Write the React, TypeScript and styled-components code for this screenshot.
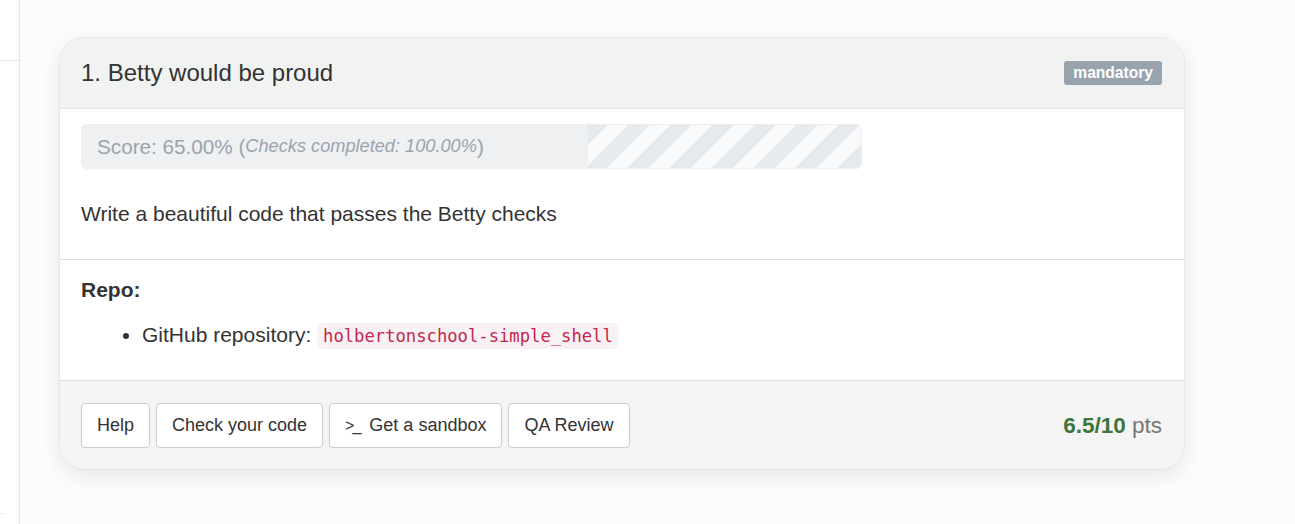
import styled, { createGlobalStyle } from 'styled-components';

const GlobalStyle = createGlobalStyle`
    html, body {
        margin: 0;
        padding: 0;
        background: #fcfcfc;
        font-family: "Liberation Sans", Arial, Helvetica, sans-serif;
        color: #333;
    }
`

const Page = styled.div`
    display: flex;
    min-height: 524px;
`

const Sidebar = styled.aside`
    width: 19px;
    flex-shrink: 0;
    background: #fff;
    border-right: 1px solid #e6e6e6;
    display: flex;
    flex-direction: column;
`

const SidebarItem = styled.div<{ $h: number; $w?: number }>`
    height: ${p => p.$h}px;
    width: ${p => p.$w ?? 19}px;
    border-bottom: 1px solid #e4e4e4;
`

const Main = styled.main`
    flex: 1;
    padding: 37px 0 0 39px;
`

const Card = styled.section`
    width: 1126px;
    box-sizing: border-box;
    border: 1px solid #e6e6e6;
    border-radius: 26px;
    overflow: hidden;
    background: #fff;
    box-shadow: 0 6px 22px rgba(0, 0, 0, 0.09);
`

const Header = styled.header`
    display: flex;
    align-items: center;
    justify-content: space-between;
    height: 70px;
    padding: 0 22px 0 21px;
    background: #f1f2f2;
    border-bottom: 1px solid #dfe2e2;
`

const Title = styled.h3`
    margin: 0;
    font-size: 24px;
    font-weight: 400;
    color: #333;
`

const Badge = styled.span`
    background: #99a3ad;
    color: #fff;
    font-weight: 700;
    font-size: 15.6px;
    line-height: 24px;
    height: 24px;
    padding: 0 9px;
    border-radius: 3px;
`

const Section = styled.div<{ $pad: string }>`
    padding: ${p => p.$pad};
    border-bottom: 1px solid #dfdfdf;
`

const Progress = styled.div`
    width: 781px;
    height: 45px;
    box-sizing: border-box;
    border: 1px solid #eceeef;
    border-radius: 6px;
    overflow: hidden;
    background: repeating-linear-gradient(
        135deg,
        #e7eaed 0px,
        #e7eaed 15px,
        #f8f9fa 15px,
        #f8f9fa 29.7px
    );
    margin-bottom: 30px;
`

const ProgressFill = styled.div`
    height: 100%;
    background: #eef0f2;
    border-radius: 6px;
    display: flex;
    align-items: center;
    padding-left: 15px;
    box-sizing: border-box;
    white-space: nowrap;
    color: #9aa4ae;
    font-size: 20.7px;
`

const Small = styled.em`
    font-size: 18.2px;
`

const Text = styled.p`
    margin: 0;
    font-size: 21px;
    line-height: 30px;
`

const Label = styled.p`
    margin: 0 0 15px;
    font-size: 21px;
    font-weight: 700;
    line-height: 30px;
`

const List = styled.ul`
    margin: 0;
    padding-left: 61px;
    font-size: 21px;
    line-height: 30px;
`

const Code = styled.code`
    font-family: "DejaVu Sans Mono", "Liberation Mono", monospace;
    font-size: 17.2px;
    color: #c7254e;
    background: #f9f2f4;
    border-radius: 5px;
    padding: 3px 6px;
`

const Footer = styled.footer`
    display: flex;
    align-items: center;
    justify-content: space-between;
    background: #f4f4f4;
    padding: 22px 22px 21px 21px;
`

const Buttons = styled.div`
    display: flex;
    gap: 6px;
`

const Button = styled.button`
    height: 45px;
    padding: 0 15px;
    background: #fff;
    border: 1px solid #ccc;
    border-radius: 4px;
    font-family: inherit;
    font-size: 18px;
    color: #333;
    cursor: pointer;
`

const Prompt = styled.span`
    font-size: 16px;
    margin-right: 10px;
    letter-spacing: -2px;
`

const Points = styled.div`
    font-size: 22.5px;
    color: #777;
`

const Earned = styled.strong`
    color: #3c763d;
`

const score = 65

export default function App() {
    return (
        <Page>
            <GlobalStyle />
            <Sidebar>
                <SidebarItem $h={60} />
                <SidebarItem $h={452} $w={4} />
            </Sidebar>
            <Main>
                <Card>
                    <Header>
                        <Title>1. Betty would be proud</Title>
                        <Badge>mandatory</Badge>
                    </Header>
                    <Section $pad="15px 23px 30px 21px">
                        <Progress>
                            <ProgressFill style={{ width: `${score}%` }}>
                                Score: 65.00% (<Small>Checks completed: 100.00%</Small>)
                            </ProgressFill>
                        </Progress>
                        <Text>Write a beautiful code that passes the Betty checks</Text>
                    </Section>
                    <Section $pad="15px 23px 29px 21px">
                        <Label>Repo:</Label>
                        <List>
                            <li>
                                GitHub repository: <Code>holbertonschool-simple_shell</Code>
                            </li>
                        </List>
                    </Section>
                    <Footer>
                        <Buttons>
                            <Button>Help</Button>
                            <Button>Check your code</Button>
                            <Button><Prompt>&gt;_</Prompt>Get a sandbox</Button>
                            <Button>QA Review</Button>
                        </Buttons>
                        <Points><Earned>6.5/10</Earned> pts</Points>
                    </Footer>
                </Card>
            </Main>
        </Page>
    );
}
